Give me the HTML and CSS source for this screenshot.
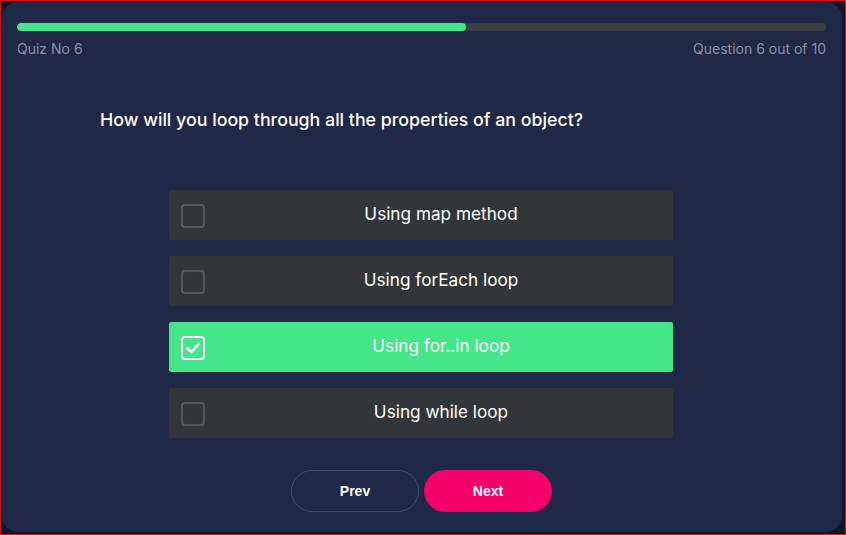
FILE: index.html
```html
<!DOCTYPE html>
<html>
<head>
<meta charset="utf-8">
<link rel="stylesheet" href="styles.css">
</head>
<body>
<div class="frame">
  <div class="card">
    <div class="progress"><div class="progress-fill" style="width:449px"></div></div>
    <div class="meta">
      <span>Quiz No 6</span>
      <span>Question 6 out of 10</span>
    </div>
    <h1 class="question">How will you loop through all the properties of an object?</h1>
    <div class="options">
      <div class="option">
        <span class="check"></span>
        <span class="label">Using map method</span>
      </div>
      <div class="option">
        <span class="check"></span>
        <span class="label">Using forEach loop</span>
      </div>
      <div class="option selected">
        <span class="check"><svg viewBox="0 0 20 20" width="20" height="20"><polyline points="4.5,10.5 8.5,14 15.5,6" fill="none" stroke="#fff" stroke-width="2.6" stroke-linecap="round" stroke-linejoin="round"/></svg></span>
        <span class="label">Using for..in loop</span>
      </div>
      <div class="option">
        <span class="check"></span>
        <span class="label">Using while loop</span>
      </div>
    </div>
    <div class="actions">
      <button class="btn btn-prev">Prev</button>
      <button class="btn btn-next">Next</button>
    </div>
  </div>
</div>
</body>
</html>
```
FILE: styles.css
```css
* { box-sizing: border-box; }
html, body { margin: 0; padding: 0; }
body {
  width: 846px;
  height: 535px;
  background: #121428;
  font-family: Inter, "Open Sans", sans-serif;
}
.frame {
  width: 846px;
  height: 535px;
  border: 1px solid #d4101c;
  padding: 1px 3px 2px 1px;
  background: #121428;
}
.card {
  height: 100%;
  background: #1f2846;
  border-radius: 16px;
  padding: 21px 16px 0 15px;
  display: flex;
  flex-direction: column;
}
.progress {
  height: 8px;
  border-radius: 4px;
  background: #3a3f42;
  overflow: hidden;
}
.progress-fill {
  height: 100%;
  background: #45e68a;
  border-radius: 4px;
}
.meta {
  display: flex;
  justify-content: space-between;
  margin-top: 8px;
  font-size: 14px;
  line-height: 20px;
  color: #8b91a8;
}
.question {
  margin: 49px 0 0 83px;
  font-size: 17.8px;
  line-height: 24px;
  font-weight: 500;
  letter-spacing: 0;
  color: #ffffff;
}
.options {
  margin: 58px 0 0 152px;
  width: 504px;
  display: flex;
  flex-direction: column;
  gap: 16px;
}
.option {
  position: relative;
  height: 50px;
  background: #333638;
  border-radius: 2px;
  padding: 0 0 3px 40px;
  display: flex;
  align-items: center;
  justify-content: center;
  color: #ffffff;
  font-size: 17.2px;
  font-weight: 400;
}
.option .check {
  position: absolute;
  left: 12px;
  top: 14px;
  width: 24px;
  height: 24px;
  border: 2px solid #56595c;
  border-radius: 4px;
  display: flex;
  align-items: center;
  justify-content: center;
}
.option.selected {
  background: #45e68a;
}
.option.selected .check {
  border-color: #ffffff;
}
.actions {
  margin-top: 32px;
  display: flex;
  justify-content: center;
  gap: 5px;
}
.btn {
  width: 128px;
  height: 42px;
  border-radius: 21px;
  font-family: "Liberation Sans", Arial, sans-serif;
  font-size: 14px;
  font-weight: bold;
  color: #ffffff;
  cursor: pointer;
}
.btn-prev {
  background: transparent;
  border: 1px solid #464d66;
}
.btn-next {
  background: #f5016a;
  border: none;
}
```
